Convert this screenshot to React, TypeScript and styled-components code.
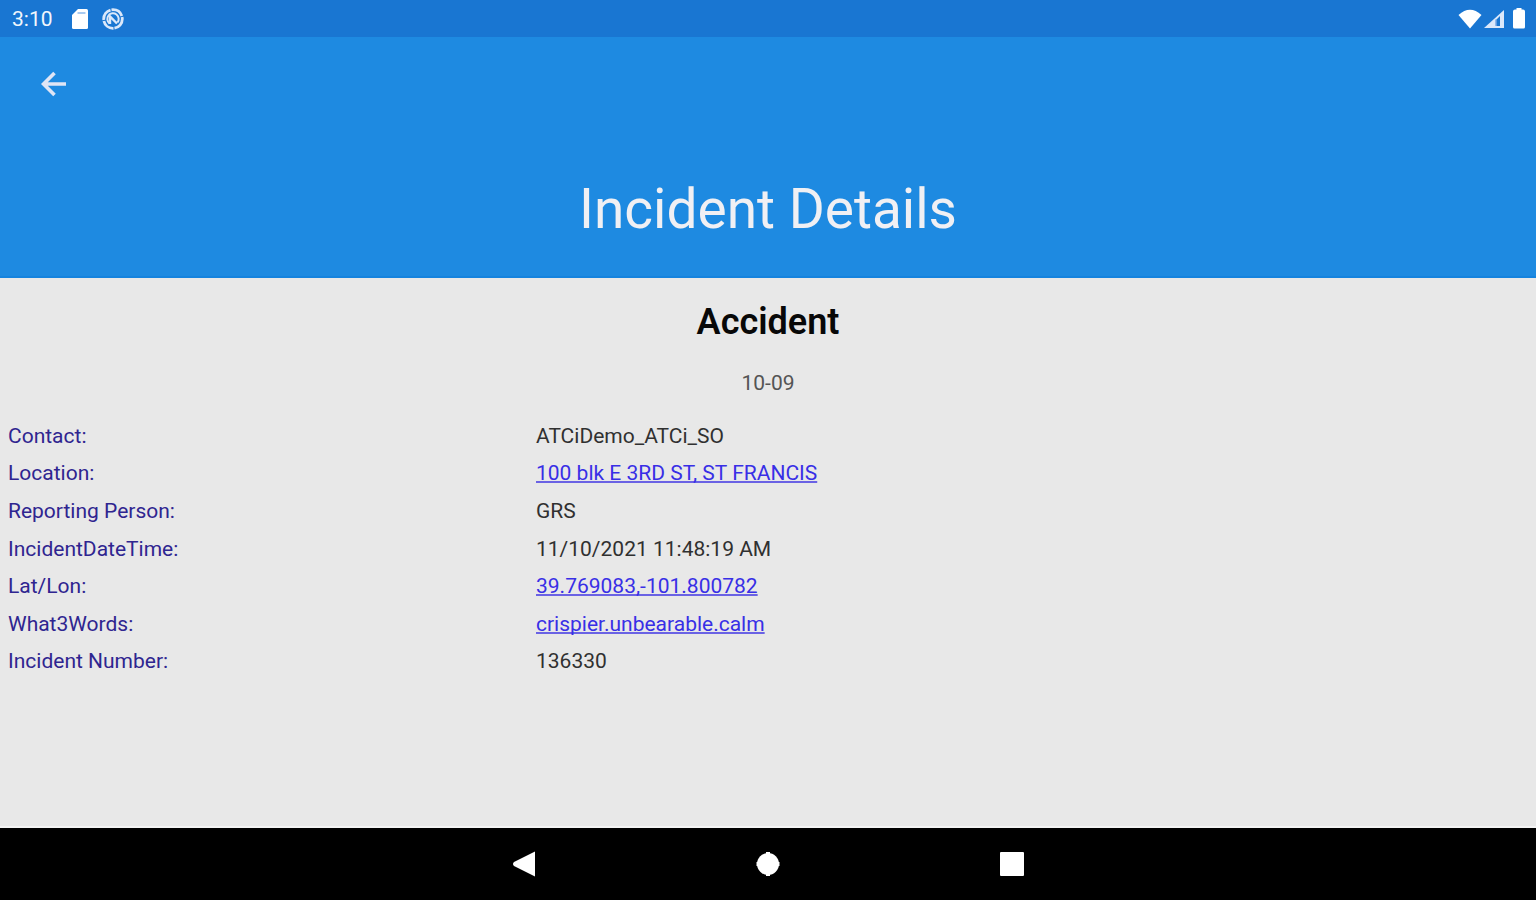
import React from "react";
import styled, { createGlobalStyle } from "styled-components";

const GlobalStyle = createGlobalStyle`
  *, *::before, *::after { box-sizing: border-box; }
  body {
    margin: 0;
    background: #e8e8e8;
    font-family: Roboto, "Liberation Sans", sans-serif;
  }
`;

const Screen = styled.div`
  display: flex;
  flex-direction: column;
  min-height: 100vh;
`;

const StatusBar = styled.div`
  display: flex;
  align-items: center;
  justify-content: space-between;
  height: 37px;
  padding: 0 11px 0 12px;
  background: #1976d2;
  color: #f2f6fc;
`;

const StatusGroup = styled.div<{ $gap: number }>`
  display: flex;
  align-items: center;
  gap: ${(p) => p.$gap}px;
`;

const Clock = styled.time`
  width: 46px;
  font-size: 21px;
  line-height: 28px;
`;

const Header = styled.header`
  height: 241px;
  padding: 23px 28px 0;
  background: #1e8ae1;
  border-bottom: 2px solid #1583de;
  color: #f0f0f4;
`;

const BackButton = styled.button`
  display: flex;
  align-items: center;
  justify-content: center;
  width: 52px;
  height: 48px;
  padding: 0;
  border: 0;
  background: none;
  color: #dfe5f5;
  cursor: pointer;
`;

const Title = styled.h1`
  margin: 69px 0 0;
  font-size: 55px;
  line-height: 64px;
  font-weight: 400;
  text-align: center;
`;

const Content = styled.main`
  flex: 1;
  padding: 20px 8px;
  border-bottom: 2px solid #f4f4f4;
`;

const IncidentType = styled.h2`
  margin: 0;
  font-size: 36px;
  line-height: 48px;
  font-weight: 600;
  text-align: center;
  color: #080808;
`;

const IncidentCode = styled.p`
  margin: 23px 0 20px;
  font-size: 21px;
  line-height: 28px;
  text-align: center;
  color: #545454;
`;

const DetailList = styled.dl`
  display: flex;
  flex-direction: column;
  height: 263px;
  margin: 0;
`;

const DetailRow = styled.div`
  display: grid;
  flex: 1;
  grid-template-columns: 1fr 2fr;
  column-gap: 32px;
  align-items: center;
  font-size: 21px;
  line-height: 28px;
`;

const Label = styled.dt`
  color: #2f2590;
`;

const Value = styled.dd`
  margin: 0;
  color: #303030;
`;

const DetailLink = styled.a`
  color: #382fe6;
  text-decoration: underline;
  text-decoration-color: #6a62e4;
  text-decoration-thickness: 2px;
  text-underline-offset: 1px;
  text-decoration-skip-ink: none;
`;

const NavBar = styled.nav`
  display: flex;
  align-items: center;
  justify-content: center;
  gap: 196px;
  height: 72px;
  background: #000;
`;

const NavButton = styled.button`
  display: flex;
  align-items: center;
  justify-content: center;
  width: 48px;
  height: 48px;
  padding: 0;
  border: 0;
  background: none;
  color: #fff;
  cursor: pointer;
`;

const details: { label: string; value: string; href?: string }[] = [
  { label: "Contact:", value: "ATCiDemo_ATCi_SO" },
  { label: "Location:", value: "100 blk E 3RD ST, ST FRANCIS", href: "#location" },
  { label: "Reporting Person:", value: "GRS" },
  { label: "IncidentDateTime:", value: "11/10/2021 11:48:19 AM" },
  { label: "Lat/Lon:", value: "39.769083,-101.800782", href: "#coordinates" },
  { label: "What3Words:", value: "crispier.unbearable.calm", href: "#what3words" },
  { label: "Incident Number:", value: "136330" },
];

const SdCardIcon = () => (
  <svg width="16" height="20" viewBox="0 0 16 20" aria-hidden="true">
    <path d="M6 0h8.500Q16 0 16 1.500v17Q16 20 14.500 20h-13Q0 20 0 18.500V6z" fill="#fff" />
    <path d="M5.500 4h8" stroke="#a9caf0" strokeWidth="2" />
  </svg>
);

const SyncOffIcon = () => (
  <svg width="22" height="22" viewBox="0 0 22 22" fill="none" stroke="#dbe8fa" aria-hidden="true">
    <circle cx="11" cy="11" r="9.300" strokeWidth="2.800" strokeDasharray="13 1" />
    <path d="M7.500 15.500A5.700 5.700 0 1 1 15.500 14.500" strokeWidth="2" />
    <path d="M8 16V8.500l7 7" strokeWidth="2.400" />
  </svg>
);

const WifiIcon = () => (
  <svg width="24" height="20" viewBox="0 0 24 20" aria-hidden="true">
    <path d="M0.500 6Q12-4.500 23.500 6L12 19.500z" fill="#fff" />
  </svg>
);

const SignalIcon = () => (
  <svg width="20" height="20" viewBox="0 0 20 20" aria-hidden="true">
    <path d="M0 19L20 1v18z" fill="#dce8fa" />
    <path d="M12 17v-6l4-4v10z" fill="#1976d2" />
    <path d="M12 10.500V17" stroke="#79a9e6" strokeWidth="1.500" />
  </svg>
);

const BatteryIcon = () => (
  <svg width="12" height="22" viewBox="0 0 12 22" aria-hidden="true">
    <path d="M3.500 0h5v1.500H10Q12 1.500 12 3.500v15.500Q12 20.500 10.500 20.500h-9Q0 20.500 0 19V3.500Q0 1.500 2 1.500h1.500z" fill="#fff" />
  </svg>
);

export default function App() {
  return (
    <Screen>
      <GlobalStyle />
      <StatusBar>
        <StatusGroup $gap={14}>
          <Clock>3:10</Clock>
          <SdCardIcon />
          <SyncOffIcon />
        </StatusGroup>
        <StatusGroup $gap={9}>
          <StatusGroup $gap={2}>
            <WifiIcon />
            <SignalIcon />
          </StatusGroup>
          <BatteryIcon />
        </StatusGroup>
      </StatusBar>
      <Header>
        <BackButton aria-label="Back">
          <svg width="26" height="26" viewBox="0 0 26 26" fill="none" stroke="currentColor" strokeWidth="3.600" aria-hidden="true">
            <path d="M13.500 2L2.500 13l11 11M3.500 13H25" />
          </svg>
        </BackButton>
        <Title>Incident Details</Title>
      </Header>
      <Content>
        <IncidentType>Accident</IncidentType>
        <IncidentCode>10-09</IncidentCode>
        <DetailList>
          {details.map((d) => (
            <DetailRow key={d.label}>
              <Label>{d.label}</Label>
              <Value>{d.href ? <DetailLink href={d.href}>{d.value}</DetailLink> : d.value}</Value>
            </DetailRow>
          ))}
        </DetailList>
      </Content>
      <NavBar aria-label="System navigation">
        <NavButton aria-label="Back">
          <svg width="22" height="26" viewBox="0 0 22 26" aria-hidden="true">
            <path d="M22 0.500v25L1 15q-2-2 0-4z" fill="currentColor" />
          </svg>
        </NavButton>
        <NavButton aria-label="Home">
          <svg width="24" height="26" viewBox="0 0 24 26" aria-hidden="true">
            <circle cx="12" cy="13" r="11" fill="currentColor" />
            <path d="M12 1v24M0.500 13h23" stroke="currentColor" strokeWidth="4" />
          </svg>
        </NavButton>
        <NavButton aria-label="Recent apps">
          <svg width="24" height="24" viewBox="0 0 24 24" aria-hidden="true">
            <rect width="24" height="24" rx="1" fill="currentColor" />
          </svg>
        </NavButton>
      </NavBar>
    </Screen>
  );
}
